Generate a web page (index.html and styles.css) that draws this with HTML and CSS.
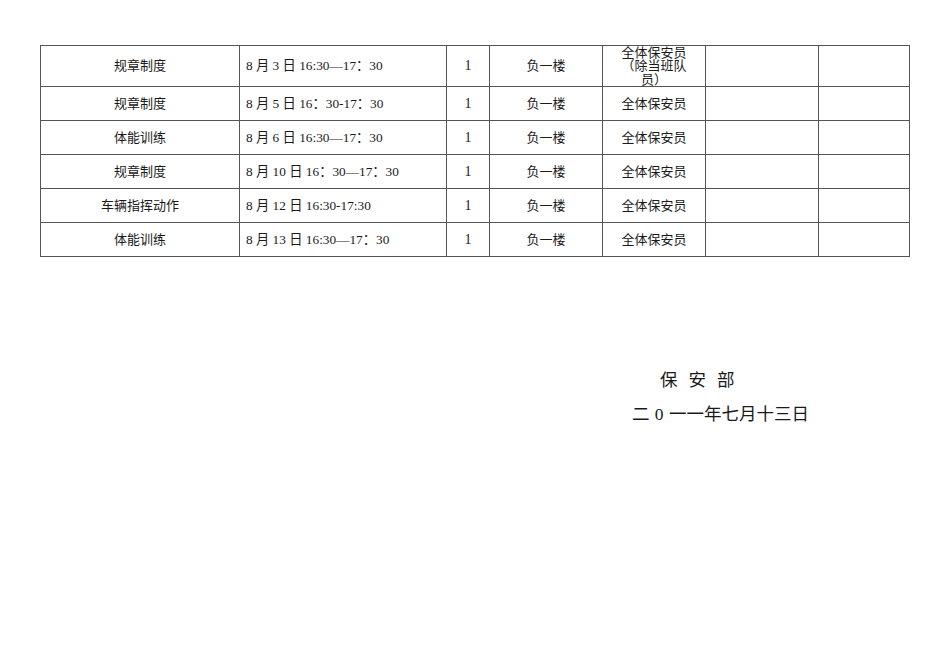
FILE: index.html
```html
<!DOCTYPE html>
<html lang="zh">
<head>
<meta charset="utf-8">
<link rel="stylesheet" href="styles.css">
</head>
<body>
<div class="page">
  <table class="sched">
    <colgroup>
      <col class="c1"><col class="c2"><col class="c3"><col class="c4"><col class="c5"><col class="c6"><col class="c7">
    </colgroup>
    <tr class="tall">
      <td>规章制度</td><td class="left">8 月 3 日 16:30—17：30</td><td class="num">1</td><td>负一楼</td>
      <td class="wrap"><div class="wrapbox">全体保安员（除当班队员）</div></td><td></td><td></td>
    </tr>
    <tr>
      <td>规章制度</td><td class="left">8 月 5 日 16：30-17：30</td><td class="num">1</td><td>负一楼</td><td>全体保安员</td><td></td><td></td>
    </tr>
    <tr>
      <td>体能训练</td><td class="left">8 月 6 日 16:30—17：30</td><td class="num">1</td><td>负一楼</td><td>全体保安员</td><td></td><td></td>
    </tr>
    <tr>
      <td>规章制度</td><td class="left">8 月 10 日 16：30—17：30</td><td class="num">1</td><td>负一楼</td><td>全体保安员</td><td></td><td></td>
    </tr>
    <tr>
      <td>车辆指挥动作</td><td class="left">8 月 12 日 16:30-17:30</td><td class="num">1</td><td>负一楼</td><td>全体保安员</td><td></td><td></td>
    </tr>
    <tr>
      <td>体能训练</td><td class="left">8 月 13 日 16:30—17：30</td><td class="num">1</td><td>负一楼</td><td>全体保安员</td><td></td><td></td>
    </tr>
  </table>
  <div class="sign">
    <div class="dept">保安部</div>
    <div class="date">二 0 一一年七月十三日</div>
  </div>
</div>
</body>
</html>
```
FILE: styles.css
```css
html, body {
  margin: 0;
  padding: 0;
  background: #fff;
}
body {
  font-family: "Liberation Serif", "Noto Sans CJK SC", serif;
  color: #1a1a1a;
}
.page {
  padding: 45px 0 0 40px;
  width: 950px;
  height: 672px;
  box-sizing: border-box;
}
.sched {
  border-collapse: collapse;
  table-layout: fixed;
  width: 869px;
  font-size: 13px;
}
.c1 { width: 199px; }
.c2 { width: 207px; }
.c3 { width: 43px; }
.c4 { width: 113px; }
.c5 { width: 103px; }
.c6 { width: 113px; }
.c7 { width: 91px; }
.sched td {
  border: 1px solid #555;
  height: 33px;
  padding: 0;
  text-align: center;
  vertical-align: middle;
  line-height: 14px;
}
.sched tr.tall td {
  height: 40px;
}
.sched td.left {
  text-align: left;
  padding-left: 6px;
  font-size: 13.3px;
}
.sched td.num {
  font-size: 14px;
}
.wrapbox {
  width: 68px;
  margin: 0 auto;
  line-height: 13.3px;
}
.sign {
  margin-top: 113px;
  margin-left: 592px;
  font-size: 17.5px;
}
.dept {
  padding-left: 28px;
  letter-spacing: 11px;
  line-height: 20px;
}
.date {
  margin-top: 14px;
  line-height: 20px;
  word-spacing: 1px;
}
```
